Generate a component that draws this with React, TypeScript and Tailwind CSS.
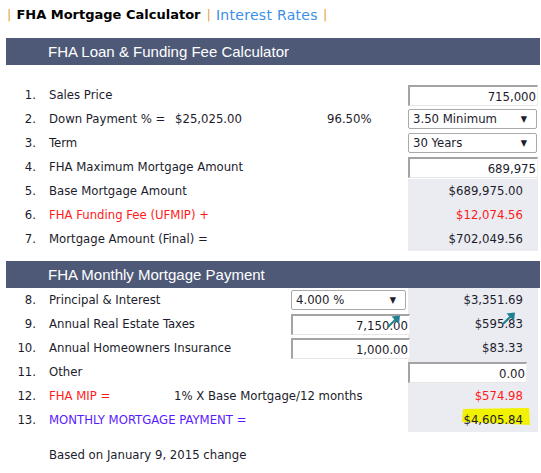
import { ReactNode } from 'react';

const font = { fontFamily: '"DejaVu Sans Condensed", "DejaVu Sans", sans-serif' };
const wide = { fontFamily: '"DejaVu Sans", sans-serif' };

function TextBox({ value, className }: { value: string; className?: string }) {
  return (
    <div
      className={
        'h-[21px] bg-white border-t-2 border-l-2 border-r border-b border-t-[#a3a3a3] border-l-[#a3a3a3] border-r-[#f0f0f0] border-b-[#e6e6e6] text-right pr-[1px] leading-[19px] text-[#1c1c2c] ' +
        (className || '')
      }
    >
      {value}
    </div>
  );
}

function Select({ value, className }: { value: string; className?: string }) {
  return (
    <div
      className={
        'h-[20px] bg-white border border-[#a9a9a9] rounded-[2px] flex items-center justify-between pl-[4px] pr-[9px] text-[#1c1c2c] ' +
        (className || '')
      }
    >
      <span>{value}</span>
      <span className="text-[9px] leading-none">▼</span>
    </div>
  );
}

function Row({ n, label, labelClass, middle, right, gray }: {
  n: string;
  label: ReactNode;
  labelClass?: string;
  middle?: ReactNode;
  right?: ReactNode;
  gray?: boolean;
}) {
  return (
    <div className="flex h-6 items-center">
      <div className="w-[36px] text-right text-[#1c1c2c]">{n}</div>
      <div className="w-[372px] flex items-center pl-[13px] h-full">
        <div className={'whitespace-nowrap ' + (labelClass || 'text-[#1c1c2c]')}>{label}</div>
        {middle}
      </div>
      <div className={'w-[130px] h-full flex items-center ' + (gray ? 'bg-[#ebecf2]' : '')}>{right}</div>
    </div>
  );
}

function Value({ children, className }: { children: ReactNode; className?: string }) {
  return <div className={'w-full text-right pr-[15px] ' + (className || 'text-[#1c1c2c]')}>{children}</div>;
}

function Bar({ title }: { title: string }) {
  return (
    <div
      className="ml-[6px] w-[534px] h-[27px] bg-[#4e5977] text-white text-[15px] pl-[42px] leading-[27px]"
      style={{ fontFamily: '"Liberation Sans", Arial, sans-serif' }}
    >
      {title}
    </div>
  );
}

function Arrow() {
  return (
    <svg width="14" height="13" viewBox="0 0 14 13" className="absolute">
      <path d="M1 12 L9 4" stroke="#1f7f93" strokeWidth="2" fill="none" />
      <path d="M4.5 1.5 L13 0.5 L12 9 Z" fill="#1f7f93" />
    </svg>
  );
}

export default function App() {
  return (
    <div className="w-[541px] h-[473px] bg-white text-[13px] overflow-hidden relative" style={font}>
      <div className="h-[30px] flex items-center pl-[7px]" style={wide}>
        <span className="text-[#e8a33d] mr-[5px]">|</span>
        <span className="font-bold text-black">FHA Mortgage Calculator</span>
        <span className="text-[#e8a33d] ml-[6px] mr-[5px]">|</span>
        <span className="text-[#3c8fe8] text-[14px] tracking-[0.3px]">Interest Rates</span>
        <span className="text-[#e8a33d] ml-[5px]">|</span>
      </div>
      <div className="mt-[8px]">
        <Bar title="FHA Loan & Funding Fee Calculator" />
      </div>
      <div className="mt-[18px]">
        <Row n="1." label="Sales Price" right={<TextBox value="715,000" className="w-[132px]" />} />
        <Row
          n="2."
          label={<span className="inline-block w-[126px]">Down Payment % =</span>}
          middle={
            <>
              <span className="w-[152px] text-[#1c1c2c]">$25,025.00</span>
              <span className="text-[#1c1c2c]">96.50%</span>
            </>
          }
          right={<Select value="3.50 Minimum" className="w-[129px]" />}
        />
        <Row n="3." label="Term" right={<Select value="30 Years" className="w-[129px]" />} />
        <Row n="4." label="FHA Maximum Mortgage Amount" right={<TextBox value="689,975" className="w-[132px]" />} />
        <Row n="5." label="Base Mortgage Amount" gray right={<Value>$689,975.00</Value>} />
        <Row n="6." label="FHA Funding Fee (UFMIP) +" labelClass="text-[#ff1a1a]" gray right={<Value className="text-[#ff1a1a]">$12,074.56</Value>} />
        <Row n="7." label="Mortgage Amount (Final) =" gray right={<Value>$702,049.56</Value>} />
      </div>
      <div className="mt-[10px]">
        <Bar title="FHA Monthly Mortgage Payment" />
      </div>
      <div>
        <Row
          n="8."
          label="Principal & Interest"
          middle={<div className="ml-auto mr-[2px]"><Select value="4.000 %" className="w-[115px]" /></div>}
          gray
          right={<Value>$3,351.69</Value>}
        />
        <Row
          n="9."
          label="Annual Real Estate Taxes"
          middle={
            <div className="ml-auto mr-[-2px] relative z-10">
              <TextBox value="7,150.00" className="w-[119px]" />
              <div className="absolute left-[96px] top-[1px]"><Arrow /></div>
            </div>
          }
          gray
          right={
            <div className="relative w-full">
              <Value>$595.83</Value>
              <div className="absolute left-[94px] top-[-2px]"><Arrow /></div>
            </div>
          }
        />
        <Row
          n="10."
          label="Annual Homeowners Insurance"
          middle={<div className="ml-auto mr-[-2px] relative z-10"><TextBox value="1,000.00" className="w-[119px]" /></div>}
          gray
          right={<Value>$83.33</Value>}
        />
        <Row n="11." label="Other" gray right={<TextBox value="0.00" className="w-[119px]" />} />
        <Row
          n="12."
          label={<span className="inline-block w-[125px]">FHA MIP =</span>}
          labelClass="text-[#ff1a1a]"
          middle={<span className="text-[#1c1c2c]">1% X Base Mortgage/12 months</span>}
          gray
          right={<Value className="text-[#ff1a1a]">$574.98</Value>}
        />
        <Row
          n="13."
          label="MONTHLY MORTGAGE PAYMENT ="
          labelClass="text-[#5a1aff]"
          gray
          right={
            <div className="relative w-full">
              <svg width="70" height="20" viewBox="0 0 70 20" className="absolute left-[54px] top-[-4px]">
                <polygon points="1,3 67,2 68,19 0,16" fill="#f2f200" />
              </svg>
              <div className="relative">
                <Value>$4,605.84</Value>
              </div>
            </div>
          }
        />
      </div>
      <div className="mt-[11px] pl-[49px] h-6 flex items-center text-[#1c1c2c]">Based on January 9, 2015 change</div>
    </div>
  );
}
